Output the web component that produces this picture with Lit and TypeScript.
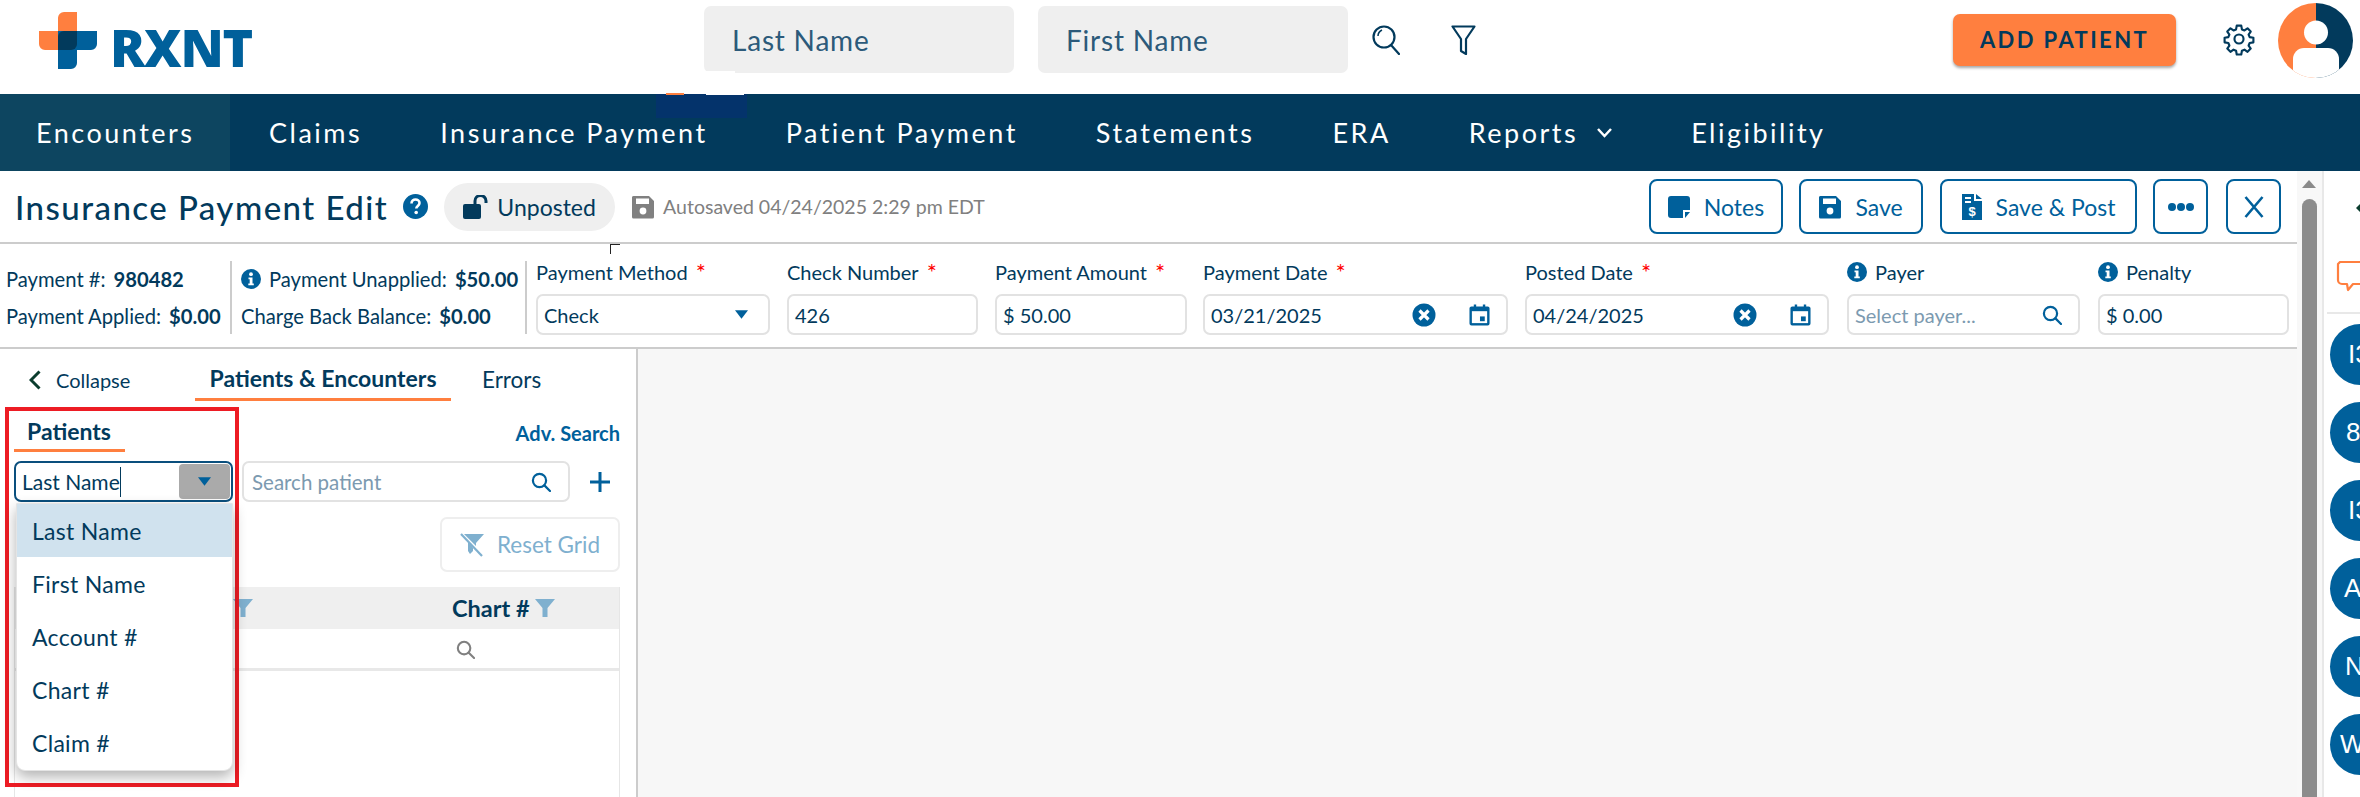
import { LitElement, html, css } from "lit";
import { customElement } from "lit/decorators.js";

const searchIcon = (c = "#00609b", s = 20) => html`<svg width=${s} height=${s} viewBox="0 0 20 20" fill="none" stroke=${c} stroke-width="2.2"><circle cx="8.5" cy="8.5" r="6.6"/><path d="M13.4 13.4L19 19" stroke-linecap="round"/></svg>`;
const clearIcon = html`<svg width="24" height="24" viewBox="0 0 24 24"><circle cx="12" cy="12" r="11.5" fill="#00609b"/><path d="M7.5 7.5l9 9M16.5 7.5l-9 9" stroke="#fff" stroke-width="3.2"/></svg>`;
const calIcon = html`<svg width="21" height="24" viewBox="0 0 22 24"><path fill="#00609b" d="M5 1h2.500v2h7V1H17v2h2.500A2 2 0 0 1 21.500 5v16a2 2 0 0 1-2 2h-17a2 2 0 0 1-2-2V5a2 2 0 0 1 2-2H5z"/><rect x="3" y="8" width="16" height="12.500" fill="#fff"/><rect x="11.500" y="13.500" width="5" height="5" fill="#00609b"/></svg>`;
const infoIcon = html`<svg width="20" height="20" viewBox="0 0 20 20"><circle cx="10" cy="10" r="10" fill="#00609b"/><circle cx="10" cy="5.200" r="1.900" fill="#fff"/><path d="M7.500 8.500h4v6h1.300v1.800H7.300v-1.800h1.400v-4.200H7.500z" fill="#fff"/></svg>`;
const caret = html`<svg width="13" height="9" viewBox="0 0 14 9"><path d="M0 0h14L7 9z" fill="#00609b"/></svg>`;
const floppy = (c: string) => html`<svg width="22" height="24" viewBox="0 0 22 24"><path fill=${c} d="M2 1h15l5 5v16a1.500 1.500 0 0 1-1.500 1.500h-19A1.500 1.500 0 0 1 0 22V2.500A1.500 1.500 0 0 1 2 1z"/><rect x="4" y="3.500" width="13" height="5.500" fill="#fff"/><circle cx="11" cy="16" r="3.400" fill="#fff"/></svg>`;
const filterIcon = html`<svg width="20" height="18" viewBox="0 0 20 18"><path d="M0 0h20l-7.500 9v9h-5V9z" fill="#7fb0cf"/></svg>`;
const dateEnd = html`<span class="end date-end">${clearIcon}${calIcon}</span>`;

const navItems = ["Encounters", "Claims", "Insurance Payment", "Patient Payment", "Statements", "ERA", "Reports", "Eligibility"];
const options = ["Last Name", "First Name", "Account #", "Chart #", "Claim #"];
const avatars = [{ t: "I3", pad: 18 }, { t: "8", pad: 16 }, { t: "I3", pad: 18 }, { t: "A", pad: 14 }, { t: "N", pad: 15 }, { t: "W", pad: 10 }];

@customElement("app-root")
export class AppRoot extends LitElement {
  static styles = css`
    :host { display: block; width: 2360px; height: 797px; overflow: hidden; position: relative; background: #fff; font-family: "Lato", "Liberation Sans", sans-serif; color: #023a5c; }
    * { box-sizing: border-box; }
    svg { display: block; flex: none; }

    .header { height: 94px; display: flex; align-items: center; position: relative; }
    .logo { width: 665px; margin-left: 39px; display: flex; align-items: center; gap: 13px; height: 94px; padding-bottom: 14px; }
    .logo-text { font-family: "Open Sans", sans-serif; font-weight: 800; font-size: 52px; line-height: 1; color: #00609b; letter-spacing: -1.2px; transform: translateY(7px); }
    .top-input { width: 310px; height: 67px; background: #efefef; border-radius: 7px; margin-right: 24px; padding: 0 28px; display: flex; align-items: center; font-size: 28px; letter-spacing: .8px; color: #2c5a7a; margin-top: -15px; }
    .top-input.last { margin-right: 25px; }
    .top-icon { margin-top: -15px; }
    .top-search { margin-left: -1px; }
    .top-filter { margin-left: 51px; }
    .add { margin-left: 477px; width: 223px; height: 52px; border-radius: 7px; background: #ff7f3f; box-shadow: 0 2px 3px rgba(0,0,0,.35); display: flex; align-items: center; justify-content: center; font-size: 22px; font-weight: 700; letter-spacing: 2.400px; color: #023a5c; margin-top: -15px; }
    .gear { margin-left: 47px; margin-top: -16px; }
    .avatar { margin-left: 23px; margin-top: -14px; }

    .nav { height: 77px; background: #023a5c; display: flex; align-items: stretch; color: #fff; font-size: 27px; letter-spacing: 2.500px; position: relative; }
    .nav-item { display: flex; align-items: center; padding: 0 39px; gap: 18px; }
    .nav-item.first { background: #0d4560; width: 230px; padding: 0 0 0 36px; }

    .body { display: flex; height: 626px; }
    .main { width: 2297px; display: flex; flex-direction: column; }
    .title-row { height: 73px; border-bottom: 2px solid #ccc; display: flex; align-items: center; padding: 0 16px 0 15px; }
    .title { font-size: 33px; font-weight: 500; letter-spacing: 1.450px; }
    .help { margin-left: 15px; }
    .pill { margin-left: 16px; height: 48px; width: 171px; border-radius: 24px; background: #efefef; display: flex; align-items: center; justify-content: center; gap: 8px; font-size: 23px; }
    .autosave { display: flex; align-items: center; margin-left: 17px; gap: 9px; font-size: 19.500px; color: #808080; }
    .actions { margin-left: auto; display: flex; gap: 16px; }
    .btn { height: 55px; border: 2px solid #00609b; border-radius: 8px; display: flex; align-items: center; justify-content: center; gap: 14px; color: #00609b; font-size: 23px; background: #fff; }
    .btn.notes { width: 134px; }
    .btn.save { width: 124px; }
    .btn.post { width: 197px; margin-left: 1px; }
    .btn.more { width: 55px; }
    .btn.close { width: 55px; margin-left: 2px; }

    .info-row { height: 105px; border-bottom: 2px solid #ccc; display: flex; align-items: flex-start; position: relative; padding-top: 17px; font-size: 20px; }
    .stats { height: 73px; display: flex; flex-direction: column; justify-content: space-around; border-right: 2px solid #ccc; }
    .stats.a { width: 232px; padding-left: 6px; }
    .stats.b { width: 295px; padding-left: 9px; }
    .stat { display: flex; align-items: center; gap: 8px; white-space: nowrap; font-size: 20.200px; }
    .stat b { font-weight: 700; }
    .field { display: flex; flex-direction: column; gap: 8px; margin-top: -3px; flex: none; }
    .label { display: flex; align-items: center; gap: 8px; height: 28px; font-size: 20px; white-space: nowrap; }
    .star { color: #f00; font-size: 24px; line-height: 20px; height: 20px; }
    .box { height: 41px; border: 2px solid #e2e2e2; border-radius: 7px; display: flex; align-items: center; padding: 0 6px; font-size: 20px; background: #fff; }
    .box .end { margin-left: auto; }
    .date-end { margin-right: 10px; display: flex; gap: 33px; align-items: center; }
    .caret-end { margin-right: 14px; }
    .payer-end { margin-right: 10px; }
    .placeholder { color: #7c9ab0; }
    .tick { position: absolute; left: 610px; top: 0; width: 10px; height: 10px; border-left: 1px solid #222; border-top: 1px solid #222; }

    .work { flex: 1; display: flex; min-height: 0; }
    .left { width: 638px; border-right: 2px solid #ccc; position: relative; background: #fff; }
    .canvas { flex: 1; background: #f7f7f7; }
    .tabs { height: 52px; display: flex; align-items: stretch; font-size: 21px; position: relative; }
    .collapse { display: flex; align-items: center; gap: 15px; padding: 10px 0 0 29px; width: 195px; font-size: 20px; }
    .tab { display: flex; align-items: center; justify-content: center; padding-top: 8px; }
    .tab.on { width: 256px; border-bottom: 3px solid #ff7f3f; font-weight: 700; font-size: 23px; }
    .tab.err { margin-left: 31px; font-size: 22.500px; }
    .sub { height: 51px; margin-top: 6px; display: flex; justify-content: space-between; align-items: flex-start; padding: 0 16px 0 14px; }
    .sub-tab { width: 111px; height: 45px; border-bottom: 3px solid #ff7f3f; padding-left: 13px; font-size: 23px; font-weight: 700; line-height: 48px; }
    .adv { font-size: 20px; font-weight: 700; color: #00609b; padding-top: 14px; }
    .search-row { display: flex; align-items: center; margin-top: 3px; padding-left: 14px; }
    .combo { width: 219px; height: 41px; border: 2px solid #0a4f7d; border-radius: 7px; display: flex; align-items: center; padding: 0 1px 0 6px; font-size: 21px; }
    .caret-line { width: 1px; height: 30px; background: #023a5c; }
    .combo-btn { margin-left: auto; width: 51px; height: 35px; background: #aaa; border-radius: 4px; display: flex; align-items: center; justify-content: center; }
    .patient { width: 328px; margin-left: 9px; height: 41px; border: 2px solid #e2e2e2; border-radius: 7px; display: flex; align-items: center; padding: 0 17px 0 8px; font-size: 20.500px; }
    .patient .end { margin-left: auto; }
    .plus { margin-left: 20px; }
    .reset-wrap { display: flex; justify-content: flex-end; padding-right: 16px; margin-top: 15px; }
    .reset { width: 180px; height: 55px; border: 2px solid #eee; border-radius: 7px; display: flex; align-items: center; gap: 12px; padding-left: 17px; font-size: 22.500px; color: #7fb0cf; }
    .grid { margin: 15px 16px 0 14px; border-left: 1px solid #e6e6e6; border-right: 1px solid #e6e6e6; height: 300px; }
    .grid-head { height: 42px; background: #efefef; display: flex; align-items: center; }
    .col-filter { margin-left: 218px; }
    .chart { margin-left: 199px; font-size: 23.500px; font-weight: 700; display: flex; align-items: center; gap: 5px; }
    .grid-filter { height: 42px; border-bottom: 3px solid #e8e8e8; padding: 2px 0 0 441px; display: flex; align-items: center; }

    .red { position: absolute; left: 5px; top: 58px; width: 234px; height: 380px; border: 4px solid #ed1c24; pointer-events: none; }
    .menu { position: absolute; left: 16px; top: 154px; width: 217px; height: 268px; background: #fff; border: 1px solid #e4e4e4; border-radius: 0 0 9px 9px; box-shadow: 0 6px 14px rgba(0,0,0,.3); }
    .opt { height: 53px; padding-left: 15px; display: flex; align-items: center; font-size: 23px; letter-spacing: .3px; }
    .opt.on { background: #d0e2ee; }

    .scroll { width: 25px; background: #f8f8f8; padding: 9px 0 0 5px; display: flex; flex-direction: column; gap: 11px; }
    .up { width: 0; height: 0; border: 7px solid transparent; border-top: 0; border-bottom: 8px solid #8a8a8a; }
    .thumb { width: 15px; flex: 1; background: #8c8c8c; border-radius: 8px 8px 0 0; }
    .rail { width: 38px; border-left: 2px solid #e8e8e8; overflow: hidden; display: flex; flex-direction: column; }
    .rail-top { height: 143px; border-bottom: 2px solid #e8e8e8; margin-left: 3px; position: relative; flex: none; }
    .chev { position: absolute; left: 29px; top: 29px; }
    .chat { position: absolute; left: 9px; top: 90px; }
    .circles { padding: 10px 0 0 6px; display: flex; flex-direction: column; gap: 17px; }
    .circle { width: 61px; height: 61px; border-radius: 50%; background: #00609b; color: #fff; display: flex; align-items: center; font-size: 26px; font-family: "Liberation Sans", sans-serif; flex: none; white-space: nowrap; }

    .mark { position: absolute; }
    .m1 { left: 656px; top: 94px; width: 91px; height: 24px; background: #04336b; }
    .m2 { left: 704px; top: 71px; width: 31px; height: 3px; background: #fff; }
    .m3 { left: 706px; top: 92px; width: 38px; height: 3px; background: #fff; }
    .m4 { left: 666px; top: 93px; width: 18px; height: 2px; background: #ff7f3f; }
  `;

  render() {
    return html`
      <div class="header">
        <div class="logo">
          <svg width="58" height="57" viewBox="0 0 58 57">
            <path fill="#ff7f3f" d="M19 6a6 6 0 0 1 6-6h13v38H6a6 6 0 0 1-6-6V19h19z"/>
            <path fill="#00609b" d="M19 19h39v13a6 6 0 0 1-6 6H38v13a6 6 0 0 1-6 6H19z"/>
            <path fill="#023a5c" d="M25 19h13v13a6 6 0 0 1-6 6H19V25a6 6 0 0 1 6-6z"/>
          </svg>
          <span class="logo-text">RXNT</span>
        </div>
        <div class="top-input">Last Name</div>
        <div class="top-input last">First Name</div>
        <svg class="top-icon top-search" width="28" height="30" viewBox="0 0 28 30" fill="none" stroke="#023a5c" stroke-width="2.200"><ellipse cx="12" cy="12" rx="10.500" ry="10.500"/><path d="M19 20l8 9" stroke-linecap="round"/><path d="M6 11c0-3 2-5 4-6" stroke-width="1.500"/></svg>
        <svg class="top-icon top-filter" width="25" height="30" viewBox="0 0 25 30" fill="none" stroke="#023a5c" stroke-width="2.200"><path d="M1.500 1.500h22L15 14v15l-5-3V14z" stroke-linejoin="round"/></svg>
        <div class="add">ADD PATIENT</div>
        <svg class="gear" width="32" height="34" viewBox="0 0 24 24" fill="none" stroke="#023a5c" stroke-width="1.600"><circle cx="12" cy="12" r="3.400"/><path d="M10.300 2h3.400l.5 2.800 1.900.8 2.300-1.600 2.400 2.400-1.600 2.300.8 1.900 2.800.5v3.400l-2.800.5-.8 1.900 1.600 2.300-2.400 2.400-2.300-1.600-1.900.8-.5 2.800h-3.400l-.5-2.800-1.900-.8-2.300 1.600-2.400-2.400 1.600-2.300-.8-1.900-2.800-.5v-3.400l2.800-.5.8-1.900-1.600-2.300 2.400-2.400 2.300 1.600 1.900-.8z" stroke-linejoin="round"/></svg>
        <svg class="avatar" width="75" height="75" viewBox="0 0 75 75">
          <defs><clipPath id="av"><circle cx="37.500" cy="37.500" r="37.500"/></clipPath></defs>
          <g clip-path="url(#av)">
            <rect width="38" height="75" fill="#ff7f3f"/>
            <rect x="38" width="37" height="75" fill="#023a5c"/>
            <ellipse cx="38" cy="29.500" rx="12" ry="12" fill="#fff"/>
            <path d="M15 75V56a11 11 0 0 1 11-11h24a11 11 0 0 1 11 11v19z" fill="#fff"/>
          </g>
        </svg>
      </div>

      <div class="nav">
        ${navItems.map((n, i) => html`
          <div class="nav-item ${i === 0 ? "first" : ""}">${n}
            ${n === "Reports" ? html`<svg width="17" height="11" viewBox="0 0 17 11" fill="none" stroke="#fff" stroke-width="2.500"><path d="M2 2l6.500 7L15 2"/></svg>` : ""}
          </div>`)}
      </div>

      <div class="body">
        <div class="main">
          <div class="title-row">
            <span class="title">Insurance Payment Edit</span>
            <svg class="help" width="25" height="25" viewBox="0 0 25 25"><circle cx="12.500" cy="12.500" r="12.500" fill="#00609b"/><path d="M8.500 9.500c0-2.500 2-4 4-4s4 1.500 4 3.500c0 3-3.200 3-3.200 5.500" fill="none" stroke="#fff" stroke-width="2.600"/><circle cx="13.200" cy="18.500" r="1.800" fill="#fff"/></svg>
            <div class="pill">
              <svg width="26" height="24" viewBox="0 0 26 24"><rect x="0" y="9" width="18" height="15" rx="2" fill="#023a5c"/><path d="M12 10V6a5.500 5.500 0 0 1 11 0v2" fill="none" stroke="#023a5c" stroke-width="3"/></svg>
              Unposted
            </div>
            <div class="autosave">${floppy("#808080")}Autosaved 04/24/2025 2:29 pm EDT</div>
            <div class="actions">
              <div class="btn notes">
                <svg width="22" height="24" viewBox="0 0 22 24"><path fill="#00609b" d="M3 1h16a3 3 0 0 1 3 3v11h-7v8H3a3 3 0 0 1-3-3V4a3 3 0 0 1 3-3z"/><path fill="#00609b" d="M17 17h5l-5 6z"/></svg>
                Notes
              </div>
              <div class="btn save">${floppy("#00609b")}Save</div>
              <div class="btn post">
                <svg width="20" height="28" viewBox="0 0 20 28"><path fill="#00609b" d="M0 1h12v7h8v19H0z"/><path fill="#00609b" d="M14 1l6 5h-6z"/><path d="M3 5h6M3 9h6" stroke="#fff" stroke-width="2"/><text x="10" y="23" text-anchor="middle" font-size="13" font-weight="700" fill="#fff" font-family="Liberation Sans">$</text></svg>
                Save &amp; Post
              </div>
              <div class="btn more">
                <svg width="26" height="10" viewBox="0 0 26 10" fill="#00609b"><circle cx="4" cy="5" r="4"/><circle cx="13" cy="5" r="4"/><circle cx="22" cy="5" r="4"/></svg>
              </div>
              <div class="btn close">
                <svg width="20" height="24" viewBox="0 0 20 24" fill="none" stroke="#00609b" stroke-width="2.600"><path d="M1.500 2l17 20M18.500 2l-17 20"/></svg>
              </div>
            </div>
          </div>

          <div class="info-row">
            <div class="tick"></div>
            <div class="stats a">
              <div class="stat">Payment #: <b>980482</b></div>
              <div class="stat">Payment Applied: <b>$0.00</b></div>
            </div>
            <div class="stats b">
              <div class="stat">${infoIcon}Payment Unapplied: <b>$50.00</b></div>
              <div class="stat">Charge Back Balance: <b>$0.00</b></div>
            </div>
            ${this.field("Payment Method", true, 234, 9, html`Check<span class="end caret-end">${caret}</span>`)}
            ${this.field("Check Number", true, 191, 17, html`426`)}
            ${this.field("Payment Amount", true, 192, 17, html`$ 50.00`)}
            ${this.field("Payment Date", true, 305, 16, html`03/21/2025${dateEnd}`)}
            ${this.field("Posted Date", true, 304, 17, html`04/24/2025${dateEnd}`)}
            ${this.field("Payer", false, 233, 18, html`<span class="placeholder">Select payer...</span><span class="end payer-end">${searchIcon()}</span>`)}
            ${this.field("Penalty", false, 191, 18, html`$ 0.00`)}
          </div>

          <div class="work">
            <div class="left">
              <div class="tabs">
                <div class="collapse">
                  <svg width="12" height="20" viewBox="0 0 12 20" fill="none" stroke="#0b3d2e" stroke-width="3"><path d="M10.500 1.500L2 10l8.500 8.500"/></svg>
                  Collapse
                </div>
                <div class="tab on">Patients &amp; Encounters</div>
                <div class="tab err">Errors</div>
              </div>
              <div class="sub">
                <div class="sub-tab">Patients</div>
                <div class="adv">Adv. Search</div>
              </div>
              <div class="search-row">
                <div class="combo">Last Name<span class="caret-line"></span><span class="combo-btn">${caret}</span></div>
                <div class="patient"><span class="placeholder">Search patient</span><span class="end">${searchIcon()}</span></div>
                <svg class="plus" width="20" height="20" viewBox="0 0 20 20" stroke="#00609b" stroke-width="3"><path d="M10 0v20M0 10h20"/></svg>
              </div>
              <div class="reset-wrap">
                <div class="reset">
                  <svg width="26" height="26" viewBox="0 0 26 26"><path d="M1 2h24l-8 9v3L5 2z" fill="#7fb0cf"/><path d="M2 2l21 22" stroke="#7fb0cf" stroke-width="2.200"/><path d="M9 10l5 5.500V19l-3 3-2-3z" fill="#7fb0cf"/></svg>
                  Reset Grid
                </div>
              </div>
              <div class="grid">
                <div class="grid-head">
                  <span class="col-filter">${filterIcon}</span>
                  <span class="chart">Chart # ${filterIcon}</span>
                </div>
                <div class="grid-filter">${searchIcon("#808080", 19)}</div>
              </div>
              <div class="red"></div>
              <div class="menu">
                ${options.map((o, i) => html`<div class="opt ${i === 0 ? "on" : ""}">${o}</div>`)}
              </div>
            </div>
            <div class="canvas"></div>
          </div>
        </div>

        <div class="scroll"><div class="up"></div><div class="thumb"></div></div>

        <div class="rail">
          <div class="rail-top">
            <svg class="chev" width="10" height="16" viewBox="0 0 10 16" fill="none" stroke="#0b3d2e" stroke-width="3"><path d="M9 1L2 8l7 7"/></svg>
            <svg class="chat" width="34" height="31" viewBox="0 0 34 31" fill="none" stroke="#ff7f3f" stroke-width="2.200"><path d="M4 1h30v22H17l-5 6-1-6H6a4 4 0 0 1-4-4V3z" stroke-linejoin="round"/></svg>
          </div>
          <div class="circles">
            ${avatars.map(a => html`<div class="circle" style="padding-left:${a.pad}px">${a.t}</div>`)}
          </div>
        </div>
      </div>

      <div class="mark m1"></div>
      <div class="mark m2"></div>
      <div class="mark m3"></div>
      <div class="mark m4"></div>
    `;
  }

  field(label: string, req: boolean, w: number, ml: number, content: unknown) {
    return html`<div class="field" style="width:${w}px;margin-left:${ml}px">
      <div class="label">${req ? "" : infoIcon}<span>${label}</span>${req ? html`<span class="star">*</span>` : ""}</div>
      <div class="box">${content}</div>
    </div>`;
  }
}
